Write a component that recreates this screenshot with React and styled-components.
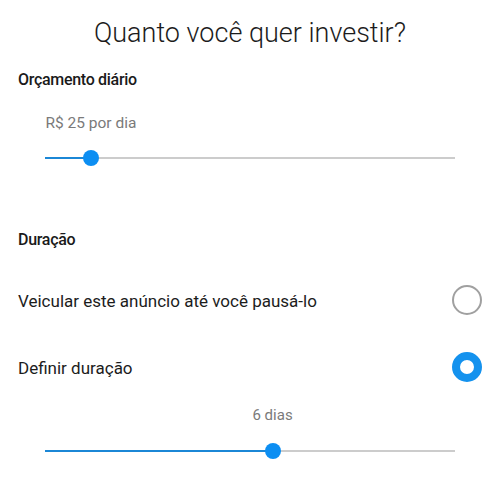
import React from "react";
import styled, { createGlobalStyle } from "styled-components";

const GlobalStyle = createGlobalStyle`
  body {
    margin: 0;
    background: #fff;
    font-family: Roboto, "Noto Sans", "Liberation Sans", sans-serif;
  }
`;

const Page = styled.div`
  display: flex;
  flex-direction: column;
  width: 500px;
  height: 487px;
  overflow: hidden;
`;

const Title = styled.h1`
  margin: 17px 0 0;
  font-size: 27px;
  font-weight: 300;
  line-height: normal;
  text-align: center;
  color: #1c1c1c;
`;

const SectionLabel = styled.h2`
  margin: ${(p) => p.$top}px 0 0;
  padding-left: 18px;
  font-size: 16px;
  font-weight: 500;
  letter-spacing: -0.3px;
  line-height: 20px;
  color: #1a1a1a;
`;

const SliderBox = styled.div`
  display: flex;
  flex-direction: column;
  margin-top: ${(p) => p.$top}px;
  padding: 0 45px;
`;

const ValueRow = styled.div`
  display: flex;
`;

const ValueLabel = styled.span`
  flex-shrink: 0;
  font-size: ${(p) => p.$size}px;
  line-height: normal;
  color: #7a7a7a;
  transform: translateX(-50%);
  white-space: nowrap;
`;

const Track = styled.div`
  display: flex;
  align-items: center;
  height: 16px;
  margin-top: ${(p) => p.$gap}px;
`;

const Fill = styled.div`
  height: 2px;
  background: #1b87d6;
`;

const Thumb = styled.div`
  position: relative;
  z-index: 1;
  flex-shrink: 0;
  width: 16px;
  height: 16px;
  margin: 0 -8px;
  border-radius: 50%;
  background: #0c8ef2;
`;

const Rest = styled.div`
  flex: 1;
  height: 2px;
  background: #cccccc;
`;

const OptionRow = styled.div`
  display: flex;
  align-items: center;
  justify-content: space-between;
  margin-top: ${(p) => p.$top}px;
  padding: 0 18px;
  height: 30px;
`;

const OptionText = styled.span`
  font-size: 17px;
  line-height: normal;
  color: #1c1c1c;
  padding-top: 1px;
`;

const Radio = styled.span`
  box-sizing: border-box;
  width: 30px;
  height: 30px;
  border-radius: 50%;
  border: ${(p) => (p.$checked ? "8px solid #1492ee" : "2px solid #a0a0a0")};
  background: #fff;
`;

const Slider = ({ label, value, min, max, top, size, gap }) => {
  const pct = ((value - min) / (max - min)) * 100;
  return (
    <SliderBox $top={top}>
      <ValueRow>
        <ValueLabel $size={size} style={{ marginLeft: `${pct}%` }}>
          {label}
        </ValueLabel>
      </ValueRow>
      <Track $gap={gap}>
        <Fill style={{ width: `${pct}%` }} />
        <Thumb />
        <Rest />
      </Track>
    </SliderBox>
  );
};

export default function App() {
  return (
    <Page>
      <GlobalStyle />
      <Title>Quanto você quer investir?</Title>

      <SectionLabel $top={21}>Orçamento diário</SectionLabel>
      <Slider label="R$ 25 por dia" value={11.2} min={0} max={100} top={24} size={15.5} gap={18} />

      <SectionLabel $top={64}>Duração</SectionLabel>
      <OptionRow $top={35}>
        <OptionText>Veicular este anúncio até você pausá-lo</OptionText>
        <Radio />
      </OptionRow>
      <OptionRow $top={37}>
        <OptionText>Definir duração</OptionText>
        <Radio $checked />
      </OptionRow>

      <Slider label="6 dias" value={55.5} min={0} max={100} top={24} size={15} gap={19} />
    </Page>
  );
}
